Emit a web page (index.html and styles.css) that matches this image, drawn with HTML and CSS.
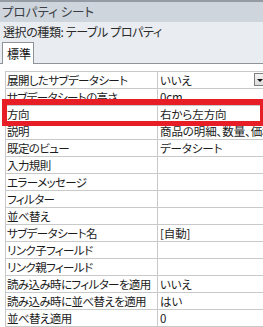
FILE: index.html
```html
<!DOCTYPE html>
<html lang="ja">
<head>
    <meta charset="UTF-8">
    <meta name="viewport" content="width=device-width, initial-scale=1.0">
    <title>プロパティ シート</title>
    <link rel="stylesheet" href="styles.css">
</head>
<body>
    <div class="pane">
        <div class="titlebar">プロパティ シート</div>
        <div class="kind">選択の種類:&nbsp;テーブル プロパティ</div>
        <div class="tabs">
            <div class="tab">標準</div>
        </div>

        <div class="sheet">
            <div class="grid">
                <div class="row">
                    <div class="label">展開したサブデータシート</div>
                    <div class="value">いいえ<span class="drop"></span></div>
                </div>
                <div class="row">
                    <div class="label">サブデータシートの高さ</div>
                    <div class="value">0cm</div>
                </div>
                <div class="row">
                    <div class="label">方向</div>
                    <div class="value">右から左方向</div>
                </div>
                <div class="row">
                    <div class="label">説明</div>
                    <div class="value">商品の明細、数量、価格</div>
                </div>
                <div class="row">
                    <div class="label">既定のビュー</div>
                    <div class="value">データシート</div>
                </div>
                <div class="row">
                    <div class="label">入力規則</div>
                    <div class="value"></div>
                </div>
                <div class="row">
                    <div class="label">エラーメッセージ</div>
                    <div class="value"></div>
                </div>
                <div class="row">
                    <div class="label">フィルター</div>
                    <div class="value"></div>
                </div>
                <div class="row">
                    <div class="label">並べ替え</div>
                    <div class="value"></div>
                </div>
                <div class="row">
                    <div class="label">サブデータシート名</div>
                    <div class="value">[自動]</div>
                </div>
                <div class="row">
                    <div class="label">リンク子フィールド</div>
                    <div class="value"></div>
                </div>
                <div class="row">
                    <div class="label">リンク親フィールド</div>
                    <div class="value"></div>
                </div>
                <div class="row">
                    <div class="label">読み込み時にフィルターを適用</div>
                    <div class="value">いいえ</div>
                </div>
                <div class="row">
                    <div class="label">読み込み時に並べ替えを適用</div>
                    <div class="value">はい</div>
                </div>
                <div class="row">
                    <div class="label">並べ替え適用</div>
                    <div class="value">0</div>
                </div>
            </div>
        </div>

        <!-- highlight over the 方向 row -->
        <div class="highlight"></div>
    </div>
</body>
</html>
```

FILE: styles.css
```css
body {
    margin: 0;
    font-family: "Noto Sans CJK JP", "Noto Sans", sans-serif;
    font-size: 11.5px;
    letter-spacing: -0.6px;
    font-feature-settings: "palt";
    color: #1b1b1b;
    background-color: #e9ecf0;
    overflow: hidden;
}
.pane {
    position: relative;
    width: 263px;
    height: 327px;
    overflow: hidden;
}
.titlebar {
    border-top: 2px solid #959ba4;
    height: 20px;
    line-height: 20px;
    padding-left: 2px;
    background: #cfd5dc;
    color: #3a3f47;
    font-size: 12.5px;
    letter-spacing: 0;
}
.kind {
    height: 19px;
    line-height: 20px;
    padding-left: 3px;
    color: #2a2a2a;
    font-size: 12px;
    letter-spacing: -0.4px;
}
.tabs {
    height: 23px;
    border-bottom: 1px solid #8e9299;
    box-sizing: border-box;
    display: flex;
    align-items: flex-end;
}
.tab {
    margin-left: 2px;
    margin-bottom: -1px;
    width: 32px;
    height: 22px;
    box-sizing: border-box;
    border: 1px solid #8e9299;
    border-bottom: none;
    background: white;
    padding-left: 4px;
    line-height: 21px;
    font-size: 12px;
    letter-spacing: 0;
    color: #111;
}
.sheet {
    background: white;
    padding: 7px 0 0 5px;
    height: 270px;
}
.grid {
    border-top: 1px solid #c9c9c9;
    border-left: 1px solid #c9c9c9;
}
.row {
    display: flex;
    height: 17px;
    box-sizing: border-box;
    border-bottom: 1px solid #c9c9c9;
    line-height: 17px;
}
.label {
    width: 150px;
    flex-shrink: 0;
    border-right: 1px solid #c9c9c9;
    padding-left: 1px;
    white-space: nowrap;
    overflow: hidden;
}
.value {
    position: relative;
    flex: 1;
    padding-left: 2px;
    letter-spacing: -0.1px;
    white-space: nowrap;
    overflow: hidden;
}
.drop {
    position: absolute;
    right: 0;
    top: 1px;
    width: 9px;
    height: 13px;
    box-sizing: border-box;
    border: 1px solid #7d7d7d;
    border-right: none;
    background: linear-gradient(#f4f4f4, #dcdcdc);
}
.drop::after {
    content: "";
    position: absolute;
    left: 2px;
    top: 5px;
    border-left: 3px solid transparent;
    border-right: 3px solid transparent;
    border-top: 3px solid #111;
}
.highlight {
    position: absolute;
    left: 2px;
    top: 99px;
    width: 263px;
    height: 27px;
    box-sizing: border-box;
    border: 5px solid #e81e26;
    border-top-width: 6px;
}
```
